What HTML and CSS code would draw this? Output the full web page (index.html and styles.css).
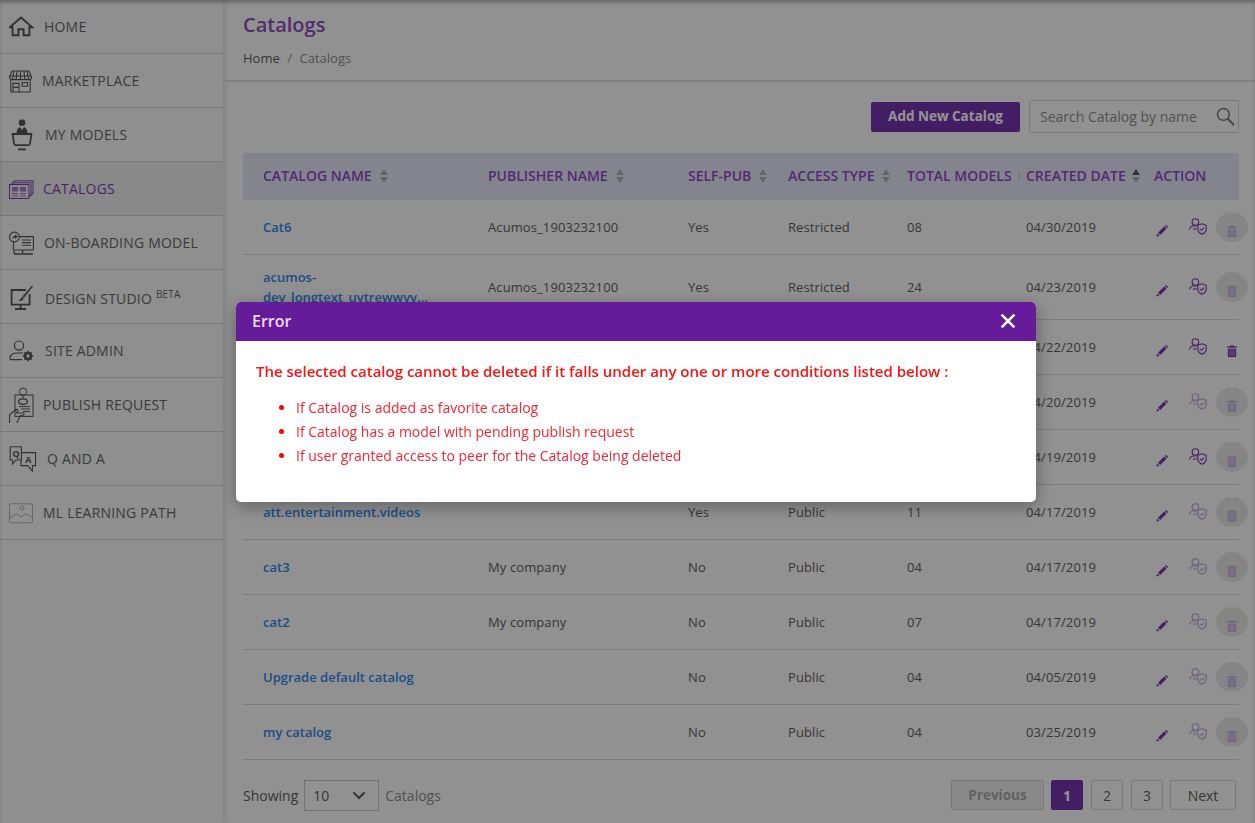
FILE: index.html
```html
<!DOCTYPE html>
<html lang="en">
<head>
  <meta charset="UTF-8">
  <meta name="viewport" content="width=device-width, initial-scale=1.0">
  <title>Catalogs</title>
  <link rel="stylesheet" href="styles.css">
</head>
<body>
  <svg class="defs" width="0" height="0" aria-hidden="true">
    <symbol id="pencil" viewBox="0 0 12 12">
      <path d="M0.4 11.6 L1.2 8.6 L3.4 10.8 Z M2 7.8 L8.2 1.6 L10.4 3.8 L4.2 10 Z M8.9 0.9 L9.6 0.3 Q10 0 10.4 0.3 L11.7 1.6 Q12 2 11.7 2.4 L11.1 3.1 Z" fill="currentColor"/>
    </symbol>
    <symbol id="shield" viewBox="0 0 18 17">
      <g fill="none" stroke="currentColor" stroke-width="1.1">
        <circle cx="6.4" cy="4" r="3.3"/>
        <path d="M0.6 11.4 Q1 8.3 4.4 8 H7.6"/>
        <path d="M4 11 H7.6"/>
        <path d="M13 5.8 L17.2 7.3 V10.8 Q17.2 14.6 13 16.2 Q8.8 14.6 8.8 10.8 V7.3 Z"/>
        <path d="M11 10.8 L12.6 12.3 L15 9.6"/>
      </g>
    </symbol>
    <symbol id="trash" viewBox="0 0 11 13">
      <path d="M0 1.6 H3.4 V0.4 H7.6 V1.6 H11 V3 H0 Z M1 4 H10 V13 H1 Z" fill="currentColor"/>
      <path d="M3.3 5 V12 M5.5 5 V12 M7.7 5 V12" stroke="#fff" stroke-opacity=".65" stroke-width=".9"/>
    </symbol>
  </svg>

  <div class="app">
    <nav class="sidebar">
      <a class="nav-item">
        <svg width="27" height="36" viewBox="0 0 27 36"><g fill="none" stroke="currentColor" stroke-width="1.9"><path d="M0.8 18.2 L12 8.6 L23.2 18.2 H20.4 V26.2 H14.6 V20.2 H9.4 V26.2 H3.6 V18.2 Z"/></g></svg>
        <span>Home</span>
      </a>
      <a class="nav-item">
        <svg width="25" height="36" viewBox="0 0 25 36"><g fill="none" stroke="currentColor" stroke-width="1.1"><path d="M3 8 H20 L22.5 14 Q22.5 16.6 20 16.6 H3 Q0.5 16.6 0.5 14 Z"/><path d="M5 8 L3.6 16 M8 8 L7.2 16 M11.5 8 V16 M15 8 L15.8 16 M18 8 L19.4 16 M0.8 13 H22.2"/><path d="M1.8 16.6 V29 H21.2 V16.6"/><path d="M4 29 V20.4 H10 V29 M4 24.4 H10"/><rect x="13" y="19.6" width="5.6" height="3.6"/></g></svg>
        <span>Marketplace</span>
      </a>
      <a class="nav-item">
        <svg width="28" height="36" viewBox="0 0 28 36"><circle cx="13" cy="5.8" r="3.3" fill="currentColor"/><path d="M7.5 16.4 Q7.8 11 11 10 L13 13 L15 10 Q18.2 11 18.5 16.4 Z" fill="currentColor"/><path d="M3.6 17 H22.4 L21 26.6 Q20.6 28.2 19 28.2 H7 Q5.4 28.2 5 26.6 Z" fill="none" stroke="currentColor" stroke-width="1.8"/><path d="M9 32.4 H17" stroke="currentColor" stroke-width="1.8"/></svg>
        <span>My Models</span>
      </a>
      <a class="nav-item active">
        <svg width="26" height="36" viewBox="0 0 26 36"><g fill="none" stroke="currentColor" stroke-width="1"><path d="M5 12 V9.8 H24 V23 H21.4"/><path d="M3 14 V11.8 H22 V25 H19.4"/><rect x="0.5" y="13.5" width="19.4" height="14"/></g><path d="M3 16 H9 V20.5 H3 Z M11 16 H17 V20.5 H11 Z M3 22 H9 V23.2 H3 Z M11 22 H17 V23.2 H11 Z M3 24.4 H9 V25.6 H3 Z M11 24.4 H17 V25.6 H11 Z" fill="currentColor" opacity=".65"/></svg>
        <span>Catalogs</span>
      </a>
      <a class="nav-item">
        <svg width="27" height="36" viewBox="0 0 27 36"><g fill="none" stroke="currentColor" stroke-width="1.1"><path d="M10 11.6 H24.4 V25 H4.4 V17"/><path d="M13 15 H22 M13 17.6 H22 M13 20.2 H22"/><circle cx="5.4" cy="12" r="4.9"/><path d="M5 26 V28.6 M13.6 25 V28 M5 29 H24" stroke-width="1.4"/></g><path d="M3 14.2 Q3.4 11.2 6 10.8 V9.2 L8.8 11.6 L6 14 V12.4 Q4.2 12.4 3 14.2 Z" fill="currentColor"/></svg>
        <span>On-Boarding Model</span>
      </a>
      <a class="nav-item">
        <svg width="28" height="36" viewBox="0 0 28 36"><g fill="none" stroke="currentColor"><path d="M17 11 H2.6 V25.6 H20.6 V15" stroke-width="1.8"/><path d="M11.6 26 V29.4 M6 30 H17" stroke-width="1.8"/></g><path d="M23 6.6 L24 7.6 L15 18.8 L13.4 17.4 Z" fill="currentColor"/><path d="M13 17.8 L14.8 19.4 Q13.8 22.4 9.4 21.8 Q11.8 20.8 13 17.8 Z" fill="currentColor"/></svg>
        <span class="label-low">Design Studio <sup class="beta">Beta</sup></span>
      </a>
      <a class="nav-item">
        <svg width="28" height="36" viewBox="0 0 28 36"><g fill="none" stroke="currentColor" stroke-width="1.2"><circle cx="10" cy="12.6" r="4.6"/><path d="M1 26.6 V25 Q1.4 20.6 7 20 H14 M1 26.6 H13"/></g><circle cx="19" cy="23" r="2.9" fill="none" stroke="currentColor" stroke-width="2.4"/><path d="M19 17.8 V28.2 M13.8 23 H24.2 M15.4 19.4 L22.6 26.6 M22.6 19.4 L15.4 26.6" stroke="currentColor" stroke-width="1.5" stroke-dasharray="1.6 7.2"/></svg>
        <span>Site Admin</span>
      </a>
      <a class="nav-item">
        <svg width="26" height="36" viewBox="0 0 26 36"><g fill="none" stroke="currentColor" stroke-width="1"><rect x="6" y="8" width="18" height="21.4"/><circle cx="14" cy="4.6" r="3.6"/><path d="M14 8 V12"/><ellipse cx="14" cy="14.6" rx="4.4" ry="2.8" stroke-width="1.3"/><path d="M10 19.6 H21 M12 22 H21 M14 24.6 H21"/><path d="M0.6 36 V27.6 L7 22.6 Q8.4 22 9 23.2 L7.4 26 H14.4 Q15.6 26.8 14.6 28 L11 29 L7.8 36" stroke-width="1.1"/></g></svg>
        <span>Publish Request</span>
      </a>
      <a class="nav-item">
        <svg width="30" height="36" viewBox="0 0 30 36"><g fill="none" stroke="currentColor" stroke-width="1.1"><path d="M1.2 5.8 H12.4 V19 H7 L3.6 23 V19 H1.2 Z"/><path d="M12.6 11.6 H26.6 V24.6 H23.4 V30 L18.6 24.6 H12 V19"/></g><text class="qa" x="3.4" y="15.8">Q</text><text class="qa" x="16.2" y="22.4">A</text></svg>
        <span>Q and A</span>
      </a>
      <a class="nav-item">
        <svg class="faint" width="26" height="36" viewBox="0 0 26 36"><g fill="none" stroke="currentColor" stroke-width=".9"><rect x="0.5" y="8.8" width="23" height="19" rx="1.6"/><circle cx="13" cy="13" r="2"/><path d="M1 23 L7.4 18.6 L12 22 L17 18.6 L23 22.6"/></g></svg>
        <span>ML Learning Path</span>
      </a>
    </nav>

    <main class="main">
      <header class="page-head">
        <h1>Catalogs</h1>
        <div class="crumbs"><span class="crumb-home">Home</span><span class="crumb-sep">/</span><span>Catalogs</span></div>
      </header>

      <section class="content">
        <div class="toolbar">
          <button class="btn-add">Add New Catalog</button>
          <div class="search">
            <span>Search Catalog by name</span>
            <svg width="19" height="19" viewBox="0 0 19 19"><circle cx="7.4" cy="7.4" r="5.9" fill="none" stroke="currentColor" stroke-width="1.5"/><path d="M11.8 11.8 L18 18" stroke="currentColor" stroke-width="2"/></svg>
          </div>
        </div>

        <table class="catalogs">
          <colgroup>
            <col class="c-name"><col class="c-pub"><col class="c-self"><col class="c-type"><col class="c-total"><col class="c-date"><col>
          </colgroup>
          <thead>
            <tr>
              <th>Catalog Name<i class="sort"></i></th>
              <th>Publisher Name<i class="sort"></i></th>
              <th>Self-Pub<i class="sort"></i></th>
              <th>Access Type<i class="sort"></i></th>
              <th>Total Models<i class="sort clipped"></i></th>
              <th>Created Date<i class="sort current"></i></th>
              <th>Action</th>
            </tr>
          </thead>
          <tbody>
            <tr>
              <td><a>Cat6</a></td><td>Acumos_1903232100</td><td>Yes</td><td>Restricted</td><td>08</td><td>04/30/2019</td>
              <td><div class="actions"><svg class="ic-edit"><use href="#pencil"/></svg><svg class="ic-access"><use href="#shield"/></svg><span class="del off"><svg class="ic-del"><use href="#trash"/></svg></span></div></td>
            </tr>
            <tr>
              <td><a>acumos-<br>dev_longtext_uvtrewwvv...</a></td><td>Acumos_1903232100</td><td>Yes</td><td>Restricted</td><td>24</td><td>04/23/2019</td>
              <td><div class="actions"><svg class="ic-edit"><use href="#pencil"/></svg><svg class="ic-access"><use href="#shield"/></svg><span class="del off"><svg class="ic-del"><use href="#trash"/></svg></span></div></td>
            </tr>
            <tr>
              <td></td><td></td><td></td><td></td><td></td><td>04/22/2019</td>
              <td><div class="actions"><svg class="ic-edit"><use href="#pencil"/></svg><svg class="ic-access"><use href="#shield"/></svg><span class="del"><svg class="ic-del"><use href="#trash"/></svg></span></div></td>
            </tr>
            <tr>
              <td></td><td></td><td></td><td></td><td></td><td>04/20/2019</td>
              <td><div class="actions"><svg class="ic-edit"><use href="#pencil"/></svg><svg class="ic-access faded"><use href="#shield"/></svg><span class="del off"><svg class="ic-del"><use href="#trash"/></svg></span></div></td>
            </tr>
            <tr>
              <td></td><td></td><td></td><td></td><td></td><td>04/19/2019</td>
              <td><div class="actions"><svg class="ic-edit"><use href="#pencil"/></svg><svg class="ic-access"><use href="#shield"/></svg><span class="del off"><svg class="ic-del"><use href="#trash"/></svg></span></div></td>
            </tr>
            <tr>
              <td><a>att.entertainment.videos</a></td><td></td><td>Yes</td><td>Public</td><td>11</td><td>04/17/2019</td>
              <td><div class="actions"><svg class="ic-edit"><use href="#pencil"/></svg><svg class="ic-access faded"><use href="#shield"/></svg><span class="del off"><svg class="ic-del"><use href="#trash"/></svg></span></div></td>
            </tr>
            <tr>
              <td><a>cat3</a></td><td>My company</td><td>No</td><td>Public</td><td>04</td><td>04/17/2019</td>
              <td><div class="actions"><svg class="ic-edit"><use href="#pencil"/></svg><svg class="ic-access faded"><use href="#shield"/></svg><span class="del off"><svg class="ic-del"><use href="#trash"/></svg></span></div></td>
            </tr>
            <tr>
              <td><a>cat2</a></td><td>My company</td><td>No</td><td>Public</td><td>07</td><td>04/17/2019</td>
              <td><div class="actions"><svg class="ic-edit"><use href="#pencil"/></svg><svg class="ic-access faded"><use href="#shield"/></svg><span class="del off"><svg class="ic-del"><use href="#trash"/></svg></span></div></td>
            </tr>
            <tr>
              <td><a>Upgrade default catalog</a></td><td></td><td>No</td><td>Public</td><td>04</td><td>04/05/2019</td>
              <td><div class="actions"><svg class="ic-edit"><use href="#pencil"/></svg><svg class="ic-access faded"><use href="#shield"/></svg><span class="del off"><svg class="ic-del"><use href="#trash"/></svg></span></div></td>
            </tr>
            <tr>
              <td><a>my catalog</a></td><td></td><td>No</td><td>Public</td><td>04</td><td>03/25/2019</td>
              <td><div class="actions"><svg class="ic-edit"><use href="#pencil"/></svg><svg class="ic-access faded"><use href="#shield"/></svg><span class="del off"><svg class="ic-del"><use href="#trash"/></svg></span></div></td>
            </tr>
          </tbody>
        </table>

        <div class="table-foot">
          <div class="showing">
            <span>Showing</span>
            <div class="page-size">10<svg width="14" height="9" viewBox="0 0 14 9"><path d="M1.4 1.4 L7 7 L12.6 1.4" fill="none" stroke="currentColor" stroke-width="2"/></svg></div>
            <span class="muted">Catalogs</span>
          </div>
          <div class="pager">
            <button class="prev">Previous</button>
            <button class="num on">1</button>
            <button class="num">2</button>
            <button class="num last">3</button>
            <button class="next">Next</button>
          </div>
        </div>
      </section>
    </main>
  </div>

  <div class="overlay"></div>
  <div class="modal">
    <div class="modal-head">
      <span>Error</span>
      <svg width="16" height="16" viewBox="0 0 16 16"><path d="M1.6 1.6 L14.4 14.4 M14.4 1.6 L1.6 14.4" stroke="#fff" stroke-width="2.6"/></svg>
    </div>
    <div class="modal-body">
      <p>The selected catalog cannot be deleted if it falls under any one or more conditions listed below :</p>
      <ul>
        <li>If Catalog is added as favorite catalog</li>
        <li>If Catalog has a model with pending publish request</li>
        <li>If user granted access to peer for the Catalog being deleted</li>
      </ul>
    </div>
  </div>
</body>
</html>
```

FILE: styles.css
```css
* {
  box-sizing: border-box;
}

body {
  margin: 0;
  height: 823px;
  overflow: hidden;
  font-family: 'Open Sans', sans-serif;
  font-size: 13px;
  color: #606060;
  background-color: #fafafa;
}

.defs {
  position: absolute;
}

.app {
  display: flex;
  height: 823px;
}

.sidebar {
  width: 223px;
  flex: none;
  background-color: #f7f7f7;
  box-shadow: 3px 0 5px rgba(0, 0, 0, 0.1);
}

.nav-item {
  display: flex;
  align-items: center;
  gap: 8px;
  height: 54px;
  padding-left: 9px;
  border-bottom: 1px solid #d4d4d4;
  font-size: 14px;
  letter-spacing: 0.2px;
  color: #666;
  text-transform: uppercase;
}

.nav-item svg {
  flex: none;
  color: #555;
}

.nav-item svg.faint {
  color: #aaa;
}

.nav-item.active,
.nav-item.active svg {
  color: #7f3fb8;
}

.nav-item.active {
  background-color: #ececec;
}

.label-low {
  padding-top: 4px;
}

.beta {
  font-size: 10px;
  line-height: 0;
  position: relative;
}

.qa {
  font-size: 9px;
  font-weight: 700;
  fill: currentColor;
}

.main {
  flex: 1;
  min-width: 0;
}

.page-head {
  height: 82px;
  padding: 11px 0 0 20px;
  border-bottom: 2px solid #dfdfdf;
}

.page-head h1 {
  margin: 0;
  font-size: 20px;
  font-weight: 600;
  line-height: 28px;
  color: #8a4cc0;
}

.crumbs {
  display: flex;
  gap: 7.5px;
  margin-top: 10px;
  color: #8c8c8c;
  line-height: 18px;
}

.crumb-home {
  color: #5c5c5c;
}

.content {
  padding: 18px 16px 0 20px;
}

.toolbar {
  display: flex;
  justify-content: flex-end;
  align-items: flex-start;
  gap: 9px;
  height: 53px;
}

.btn-add {
  width: 149px;
  height: 30px;
  margin-top: 2px;
  padding: 0 0 2px;
  border: none;
  border-radius: 2px;
  background-color: #7534ac;
  color: #fff;
  font-family: inherit;
  font-size: 13.5px;
  font-weight: 700;
}

.search {
  display: flex;
  justify-content: space-between;
  align-items: center;
  width: 210px;
  height: 33px;
  padding: 0 3px 0 10px;
  border: 1px solid #d2d2d2;
  border-radius: 2px;
  font-size: 14px;
  color: #8c8c8c;
}

.search svg {
  color: #777;
}

.catalogs {
  width: 996px;
  table-layout: fixed;
  border-collapse: collapse;
  letter-spacing: 0.1px;
}

.c-name { width: 245px; }
.c-pub { width: 200px; }
.c-self { width: 100px; }
.c-type { width: 119px; }
.c-total { width: 119px; }
.c-date { width: 128px; }

.catalogs th {
  height: 47px;
  padding: 0 0 2px;
  background-color: #e4e3f6;
  color: #8a4cc0;
  font-size: 14px;
  font-weight: 600;
  letter-spacing: 0;
  text-align: left;
  text-transform: uppercase;
  white-space: nowrap;
}

.catalogs th:first-child,
.catalogs td:first-child {
  padding-left: 20px;
}

.catalogs td {
  height: 55px;
  padding: 0;
  border-bottom: 1px solid #d8d8d8;
}

.catalogs tbody tr:first-child td {
  height: 54px;
}

.catalogs tbody tr:nth-child(2) td {
  height: 65px;
}

.catalogs td a {
  display: block;
  font-weight: 600;
  line-height: 20px;
  letter-spacing: 0;
  color: #2f86e8;
}

.sort {
  display: inline-block;
  position: relative;
  width: 9px;
  height: 14px;
  margin-left: 8px;
  vertical-align: -2px;
}

.sort::before,
.sort::after {
  content: "";
  position: absolute;
  left: 0;
  border-left: 4.5px solid transparent;
  border-right: 4.5px solid transparent;
}

.sort::before {
  top: 0;
  border-bottom: 6px solid #b0b0b0;
}

.sort::after {
  bottom: 0;
  border-top: 6px solid #b0b0b0;
}

.sort.current {
  margin-left: 6px;
}

.sort.current::before {
  border-bottom-color: #555;
}

.sort.clipped {
  width: 2px;
  margin-left: 6px;
  overflow: hidden;
}

.actions {
  display: flex;
  align-items: center;
  padding-left: 2px;
  color: #7534ac;
}

.actions svg {
  flex: none;
}

.ic-edit {
  width: 12px;
  height: 12px;
  margin-top: 9px;
}

.ic-access {
  width: 18px;
  height: 17px;
  margin-left: 21px;
}

.ic-access.faded {
  opacity: 0.45;
}

.del {
  display: flex;
  justify-content: center;
  flex: none;
  width: 32px;
  height: 30px;
  padding: 13px 1px 0 0;
  margin-left: 9px;
  border-radius: 50%;
}

.del.off {
  background-color: #e6e6e6;
  color: #c4a9da;
}

.ic-del {
  width: 10px;
  height: 12px;
}

.table-foot {
  display: flex;
  justify-content: space-between;
  align-items: center;
  margin-top: 20px;
  padding-right: 3px;
}

.showing {
  display: flex;
  align-items: center;
  gap: 6px;
  font-size: 14px;
}

.muted {
  color: #8c8c8c;
}

.page-size {
  display: flex;
  justify-content: space-between;
  align-items: center;
  width: 75px;
  height: 31px;
  padding: 0 12px 0 8px;
  border: 1px solid #c4c4c4;
}

.page-size svg {
  color: #555;
}

.pager {
  display: flex;
  gap: 7px;
}

.pager button {
  height: 30px;
  padding: 0;
  border: 1px solid #d0d0d0;
  border-radius: 2px;
  background: transparent;
  color: #606060;
  font-family: inherit;
  font-size: 14px;
}

.pager .prev {
  width: 93px;
  font-size: 13.5px;
  font-weight: 700;
  color: #a8a8a8;
  background-color: #ececec;
}

.pager .num {
  width: 32px;
  margin-right: 1px;
}

.pager .num.last {
  margin-right: 0;
}

.pager .next {
  width: 66px;
}

.pager .on {
  border-color: #7534ac;
  background-color: #7534ac;
  color: #fff;
  font-weight: 700;
}

.overlay {
  position: fixed;
  inset: 0;
  background-color: rgba(0, 0, 0, 0.42);
  box-shadow: inset 0 3px 3px rgba(0, 0, 0, 0.25);
}

.modal {
  position: fixed;
  left: 236px;
  top: 302px;
  width: 800px;
  height: 200px;
  border-radius: 5px;
  overflow: hidden;
  background-color: #fff;
  box-shadow: 0 4px 18px rgba(0, 0, 0, 0.35);
}

.modal-head {
  display: flex;
  justify-content: space-between;
  align-items: center;
  height: 39px;
  padding: 0 20px 2px 16px;
  background-color: #661b9a;
  color: #eadff2;
  font-size: 16px;
  font-weight: 600;
}

.modal-body {
  padding: 20px;
  color: #fb2430;
  font-size: 14px;
}

.modal-body p {
  margin: 0;
  font-size: 15px;
  font-weight: 600;
  line-height: 20px;
  color: #fa1414;
}

.modal-body ul {
  margin: 15px 0 0;
  padding-left: 40px;
}

.modal-body li {
  line-height: 24px;
}

.modal-body li::marker {
  color: #f00;
}
```
